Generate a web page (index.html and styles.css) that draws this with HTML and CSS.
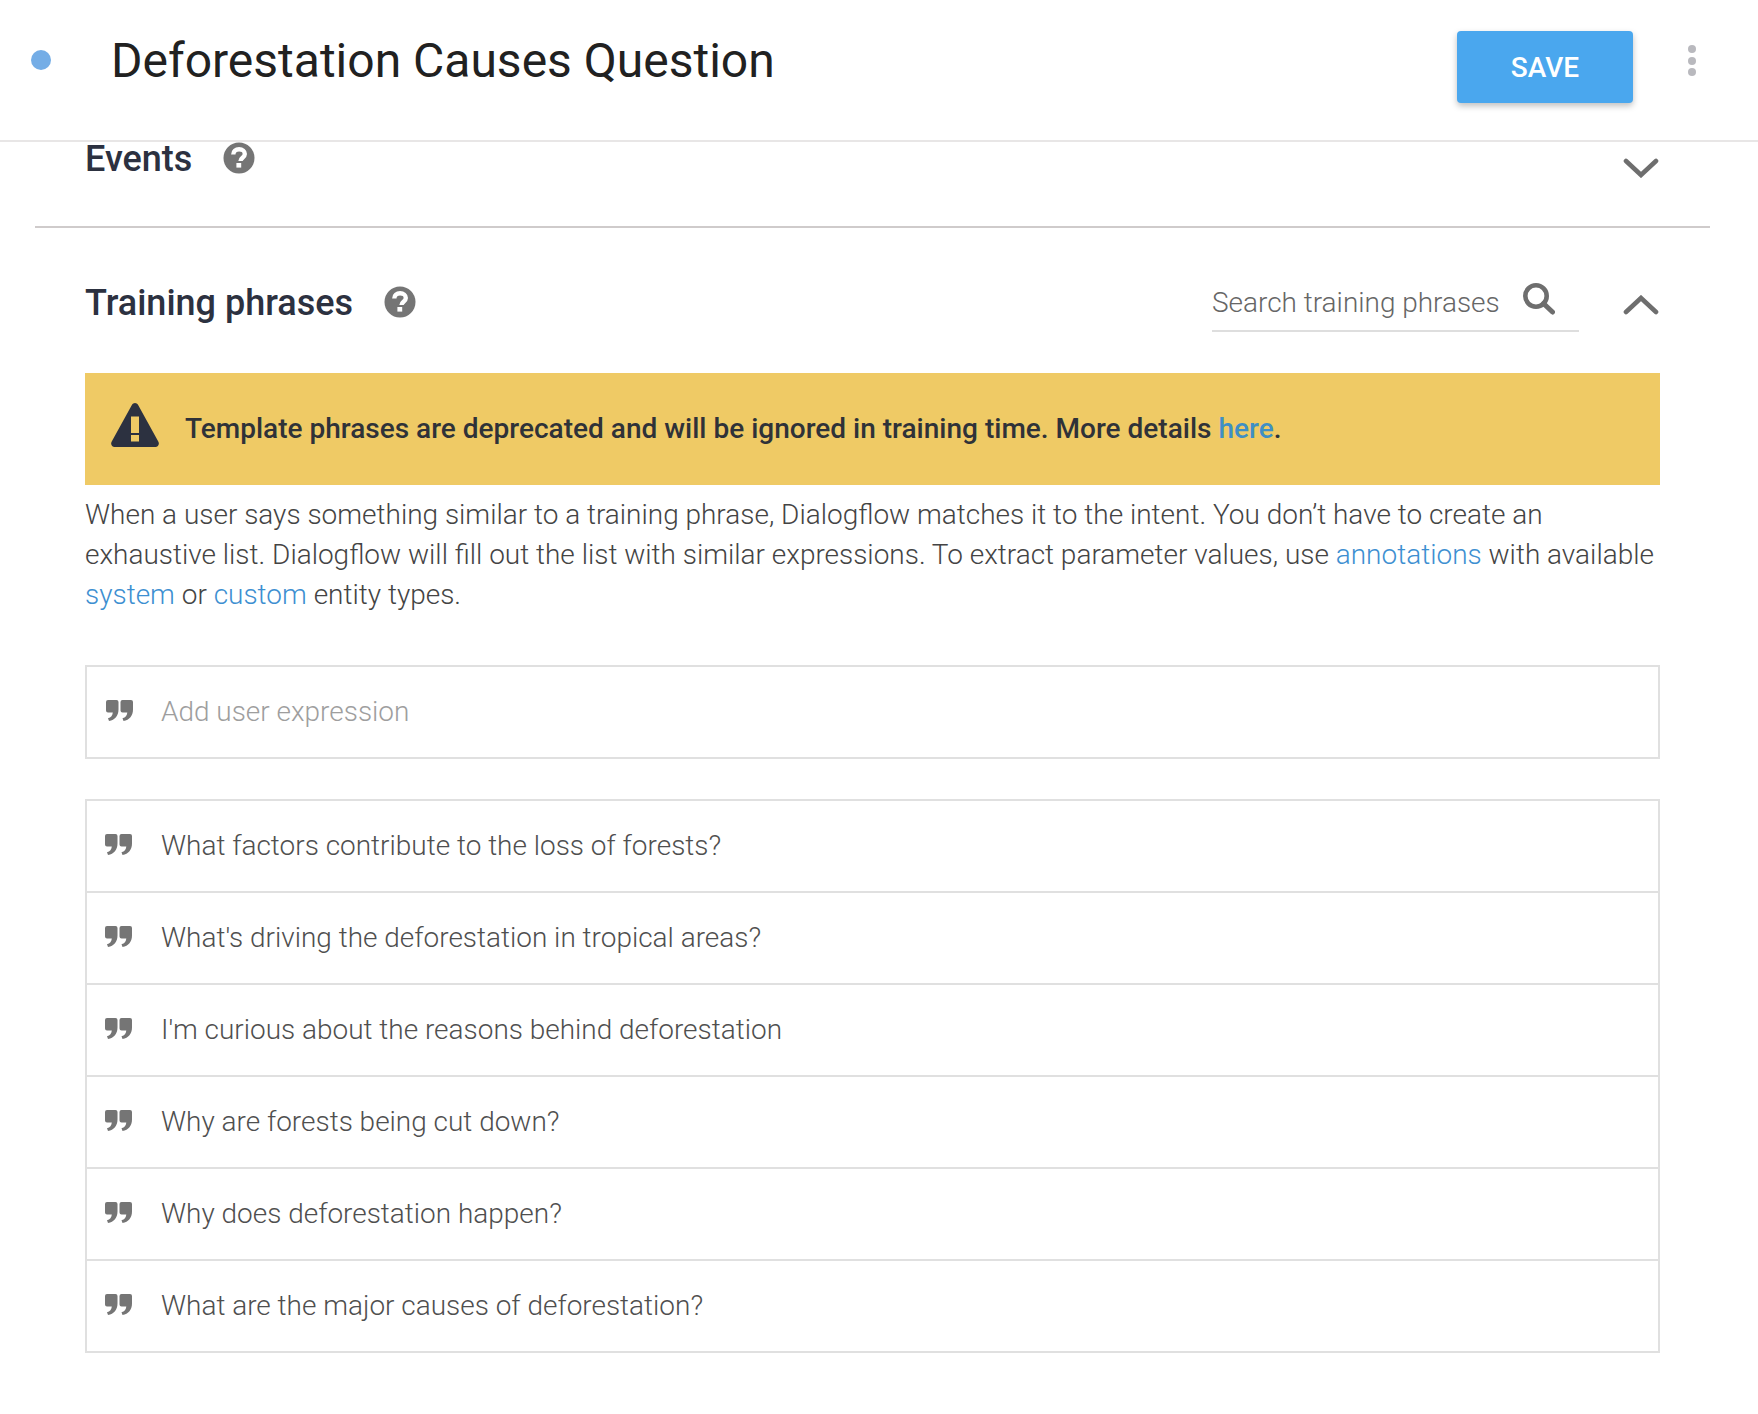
FILE: index.html
```html
<!DOCTYPE html>
<html lang="en">
<head>
<meta charset="utf-8">
<title>Deforestation Causes Question</title>
<link rel="stylesheet" href="styles.css">
</head>
<body>
<header class="topbar">
  <span class="status-dot"></span>
  <h1 class="title">Deforestation Causes Question</h1>
  <button class="save">SAVE</button>
  <span class="kebab"><i></i><i></i><i></i></span>
</header>
<main class="content">
  <section class="events">
    <h2 class="heading">Events</h2>
    <svg class="help" viewBox="0 0 32 32"><circle cx="16" cy="16" r="15.5" fill="#757575"/><path d="M10.300 12.400c0-3 2.400-5.100 5.800-5.100s5.700 1.900 5.700 4.600c0 3.800-4.300 3.800-4.300 7.100" fill="none" stroke="#fff" stroke-width="4.400"/><rect x="13.400" y="21" width="4.800" height="4.600" fill="#fff"/></svg>
    <svg class="chevron" viewBox="0 0 36 20"><path d="M3 3l15 14L33 3" fill="none" stroke="#6e6e6e" stroke-width="4.600" stroke-linecap="round"/></svg>
  </section>
  <section class="training">
    <div class="training-head">
      <h2 class="heading">Training phrases</h2>
      <svg class="help" viewBox="0 0 32 32"><circle cx="16" cy="16" r="15.5" fill="#757575"/><path d="M10.300 12.400c0-3 2.400-5.100 5.800-5.100s5.700 1.900 5.700 4.600c0 3.800-4.300 3.800-4.300 7.100" fill="none" stroke="#fff" stroke-width="4.400"/><rect x="13.400" y="21" width="4.800" height="4.600" fill="#fff"/></svg>
      <div class="search">
        <span class="search-label">Search training phrases</span>
        <svg class="search-icon" viewBox="0 0 32 32"><circle cx="13" cy="13" r="10.700" fill="none" stroke="#6e6e6e" stroke-width="4.600"/><path d="M20.500 20.500L29.500 29" stroke="#6e6e6e" stroke-width="5" stroke-linecap="round" fill="none"/></svg>
      </div>
      <svg class="chevron" viewBox="0 0 36 20"><path d="M3 17L18 3l15 14" fill="none" stroke="#6e6e6e" stroke-width="4.600" stroke-linecap="round"/></svg>
    </div>
    <div class="banner">
      <svg class="warn" viewBox="0 0 48 44"><path fill-rule="evenodd" fill="#2c3140" d="M24 0c1.300 0 2.300.7 3 1.800l20.400 37c1.300 2.400-.3 5.200-3 5.200H3.600c-2.700 0-4.300-2.800-3-5.200L21 1.800C21.700.7 22.700 0 24 0zM20 13.500V30h8V13.500zM20 32v6.500h8V32z"/></svg>
      <p class="banner-text">Template phrases are deprecated and will be ignored in training time. More details <a class="banner-link">here</a>.</p>
    </div>
    <p class="intro">When a user says something similar to a training phrase, Dialogflow matches it to the intent. You don’t have to create an exhaustive list. Dialogflow will fill out the list with similar expressions. To extract parameter values, use <a class="link">annotations</a> with available <a class="link">system</a> or <a class="link">custom</a> entity types.</p>
    <div class="add-box">
      <svg class="quote" viewBox="0 0 27 22" preserveAspectRatio="none"><path fill="#757575" d="M2 0h8.500a2 2 0 0 1 2 2v8c0 6.500-3.500 11-9.500 12L2 19c3-.8 4.600-3 4.800-6H2a2 2 0 0 1-2-2V2a2 2 0 0 1 2-2zM16.500 0H25a2 2 0 0 1 2 2v8c0 6.500-3.500 11-9.500 12l-1-3c3-.8 4.600-3 4.800-6h-4.800a2 2 0 0 1-2-2V2a2 2 0 0 1 2-2z"/></svg>
      <span class="placeholder">Add user expression</span>
    </div>
    <ul class="phrases">
      <li class="phrase"><svg class="quote" viewBox="0 0 27 22" preserveAspectRatio="none"><path fill="#757575" d="M2 0h8.500a2 2 0 0 1 2 2v8c0 6.500-3.500 11-9.500 12L2 19c3-.8 4.600-3 4.800-6H2a2 2 0 0 1-2-2V2a2 2 0 0 1 2-2zM16.500 0H25a2 2 0 0 1 2 2v8c0 6.500-3.500 11-9.500 12l-1-3c3-.8 4.600-3 4.800-6h-4.800a2 2 0 0 1-2-2V2a2 2 0 0 1 2-2z"/></svg><span>What factors contribute to the loss of forests?</span></li>
      <li class="phrase"><svg class="quote" viewBox="0 0 27 22" preserveAspectRatio="none"><path fill="#757575" d="M2 0h8.500a2 2 0 0 1 2 2v8c0 6.500-3.500 11-9.500 12L2 19c3-.8 4.600-3 4.800-6H2a2 2 0 0 1-2-2V2a2 2 0 0 1 2-2zM16.500 0H25a2 2 0 0 1 2 2v8c0 6.500-3.500 11-9.500 12l-1-3c3-.8 4.600-3 4.800-6h-4.800a2 2 0 0 1-2-2V2a2 2 0 0 1 2-2z"/></svg><span>What's driving the deforestation in tropical areas?</span></li>
      <li class="phrase"><svg class="quote" viewBox="0 0 27 22" preserveAspectRatio="none"><path fill="#757575" d="M2 0h8.500a2 2 0 0 1 2 2v8c0 6.500-3.500 11-9.500 12L2 19c3-.8 4.600-3 4.800-6H2a2 2 0 0 1-2-2V2a2 2 0 0 1 2-2zM16.500 0H25a2 2 0 0 1 2 2v8c0 6.500-3.500 11-9.500 12l-1-3c3-.8 4.600-3 4.800-6h-4.800a2 2 0 0 1-2-2V2a2 2 0 0 1 2-2z"/></svg><span>I'm curious about the reasons behind deforestation</span></li>
      <li class="phrase"><svg class="quote" viewBox="0 0 27 22" preserveAspectRatio="none"><path fill="#757575" d="M2 0h8.500a2 2 0 0 1 2 2v8c0 6.500-3.500 11-9.500 12L2 19c3-.8 4.600-3 4.800-6H2a2 2 0 0 1-2-2V2a2 2 0 0 1 2-2zM16.500 0H25a2 2 0 0 1 2 2v8c0 6.500-3.500 11-9.500 12l-1-3c3-.8 4.600-3 4.800-6h-4.800a2 2 0 0 1-2-2V2a2 2 0 0 1 2-2z"/></svg><span>Why are forests being cut down?</span></li>
      <li class="phrase"><svg class="quote" viewBox="0 0 27 22" preserveAspectRatio="none"><path fill="#757575" d="M2 0h8.500a2 2 0 0 1 2 2v8c0 6.500-3.500 11-9.500 12L2 19c3-.8 4.600-3 4.800-6H2a2 2 0 0 1-2-2V2a2 2 0 0 1 2-2zM16.500 0H25a2 2 0 0 1 2 2v8c0 6.500-3.500 11-9.500 12l-1-3c3-.8 4.600-3 4.800-6h-4.800a2 2 0 0 1-2-2V2a2 2 0 0 1 2-2z"/></svg><span>Why does deforestation happen?</span></li>
      <li class="phrase"><svg class="quote" viewBox="0 0 27 22" preserveAspectRatio="none"><path fill="#757575" d="M2 0h8.500a2 2 0 0 1 2 2v8c0 6.500-3.500 11-9.500 12L2 19c3-.8 4.600-3 4.800-6H2a2 2 0 0 1-2-2V2a2 2 0 0 1 2-2zM16.500 0H25a2 2 0 0 1 2 2v8c0 6.500-3.500 11-9.500 12l-1-3c3-.8 4.600-3 4.800-6h-4.800a2 2 0 0 1-2-2V2a2 2 0 0 1 2-2z"/></svg><span>What are the major causes of deforestation?</span></li>
    </ul>
  </section>
</main>
</body>
</html>
```

FILE: styles.css
```css
* { box-sizing: border-box; }
html, body { margin: 0; padding: 0; }
body {
  width: 1758px;
  height: 1414px;
  overflow: hidden;
  background: #fff;
  font-family: Roboto, "Liberation Sans", sans-serif;
  color: #555;
}
.topbar {
  display: flex;
  align-items: flex-start;
  height: 142px;
  border-bottom: 2px solid #e8e6e6;
  padding-top: 31px;
}
.status-dot {
  width: 20px;
  height: 20px;
  border-radius: 50%;
  background: #74ade6;
  margin: 19px 0 0 31px;
  flex: none;
}
.title {
  margin: 0 0 0 60px;
  font-size: 48px;
  line-height: 60px;
  font-weight: 400;
  color: #212121;
  flex: 1;
}
.save {
  width: 176px;
  height: 72px;
  border: 0;
  border-radius: 4px;
  background: #4aa7ee;
  color: #fff;
  font: 500 28px Roboto, sans-serif;
  box-shadow: 0 3px 6px rgba(0, 0, 0, .25);
  flex: none;
}
.kebab {
  display: flex;
  flex-direction: column;
  gap: 3.5px;
  margin: 14px 62px 0 55px;
  flex: none;
}
.kebab i {
  width: 8px;
  height: 8px;
  border-radius: 50%;
  background: #b9b9be;
}
.content { margin: 0 48px 0 35px; }
.events {
  display: flex;
  align-items: flex-start;
  height: 86px;
  padding: 0 50px;
  border-bottom: 2px solid #cfcbcb;
}
.heading {
  margin: 0;
  font-size: 36px;
  line-height: 36px;
  font-weight: 500;
  color: #2c3140;
  flex: none;
}
.events .heading { margin-top: -1px; }
.events .help { margin: 0 0 0 31px; }
.help { width: 32px; height: 32px; flex: none; }
.events .chevron { margin: 16px 1px 0 auto; }
.chevron { width: 36px; height: 20px; flex: none; }
.training { padding: 0 50px; }
.training-head {
  display: flex;
  align-items: flex-start;
  height: 145px;
  padding-top: 57px;
}
.training-head .help { margin: 1px 0 0 31px; }
.search {
  margin-left: auto;
  width: 367px;
  height: 49px;
  margin-top: -2px;
  border-bottom: 2px solid #dedede;
  display: flex;
  align-items: flex-start;
}
.search-label {
  font-size: 27.96px;
  font-weight: 300;
  line-height: 40px;
  margin-top: 0;
  color: #666;
}
.search-icon { width: 32px; height: 32px; margin: 0 0 0 23px; }
.training-head .chevron { margin: 10px 1px 0 44px; }
.banner {
  display: flex;
  align-items: center;
  height: 112px;
  background: #efca65;
  padding: 0 0 2px 26px;
}
.warn { width: 48px; height: 44px; flex: none; margin-bottom: 6px; }
.banner-text {
  margin: 0 0 0 26px;
  font-size: 28.02px;
  font-weight: 500;
  color: #2f3238;
}
.banner-link { color: #3f8fc4; }
.intro {
  margin: 10px 0 0;
  font-size: 27.97px;
  line-height: 40px;
  font-weight: 300;
  color: #444;
}
.link { color: #3d8fd1; }
.add-box, .phrase {
  display: flex;
  align-items: center;
  padding-bottom: 2px;
  font-size: 27.96px;
  font-weight: 300;
}
.add-box {
  gap: 28px;
  padding-left: 19px;
  height: 94px;
  margin-top: 50px;
  border: 2px solid #e0e0e0;
  color: #9e9e9e;
}
.quote { width: 27px; height: 21px; flex: none; margin-bottom: 2px; }
.phrases {
  list-style: none;
  margin: 40px 0 0;
  padding: 0;
  border: 2px solid #e0e0e0;
  border-bottom: 0;
}
.phrase {
  gap: 29px;
  height: 92px;
  padding-left: 18px;
  border-bottom: 2px solid #e0e0e0;
  color: #4f4f4f;
}
```
